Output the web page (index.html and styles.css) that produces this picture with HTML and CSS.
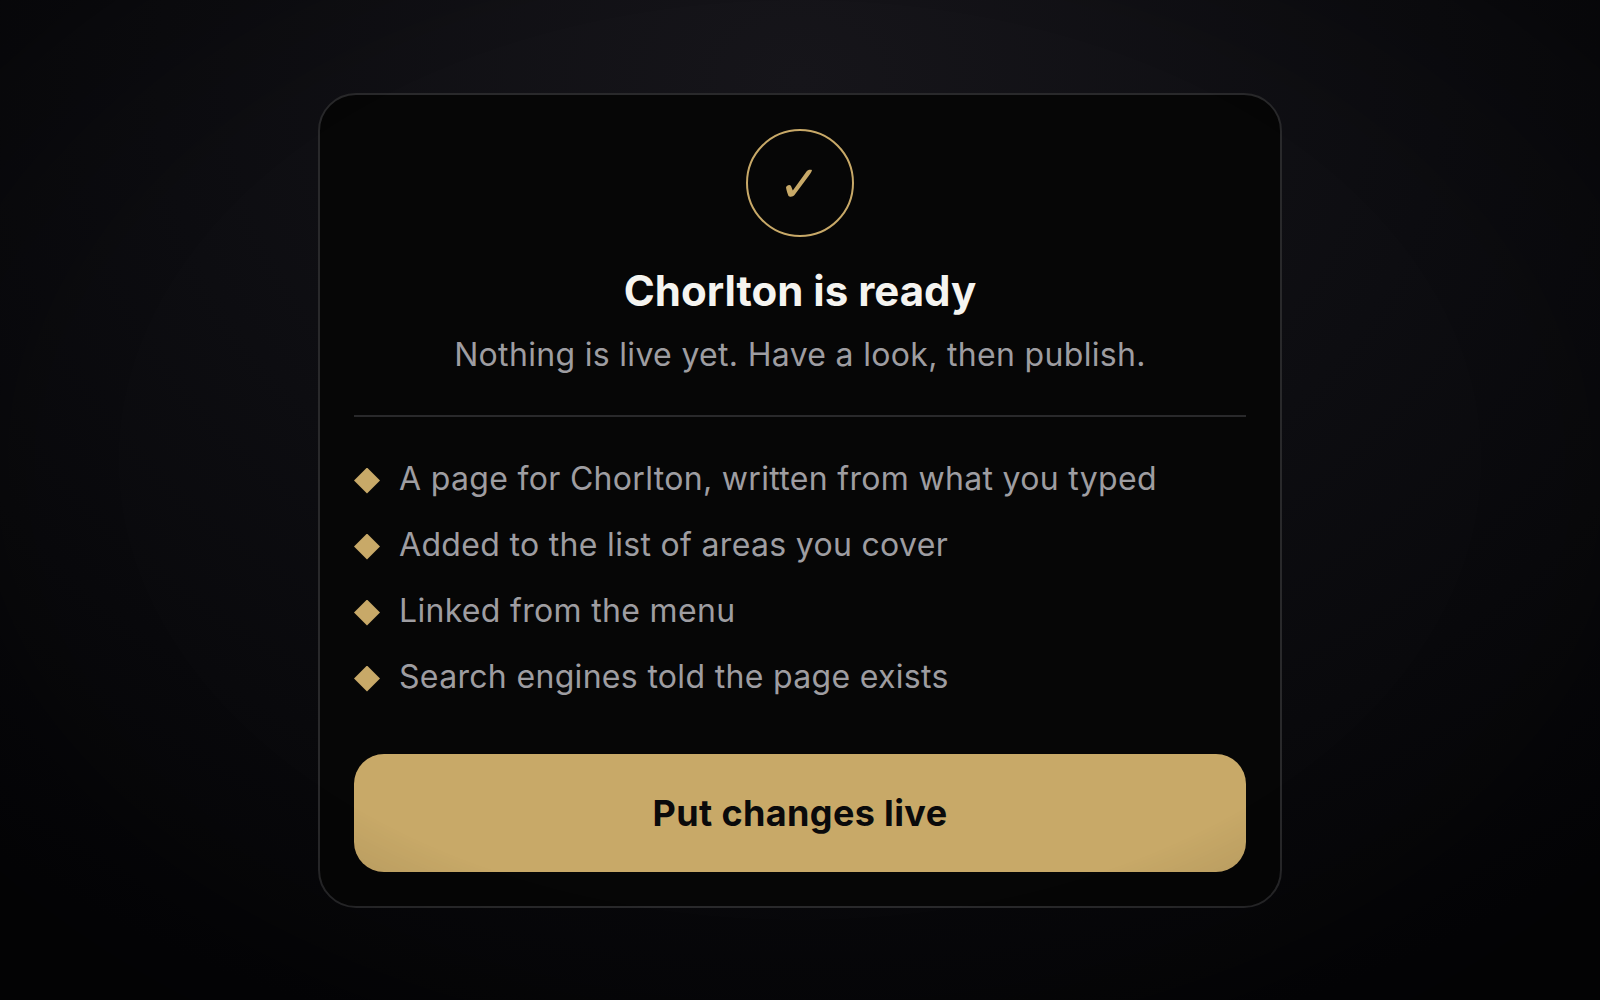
FILE: index.html
```html
<!DOCTYPE html>
<html lang="en">
<head>
<meta charset="utf-8">
<meta name="viewport" content="width=device-width, initial-scale=1">
<title>Chorlton is ready</title>
<link rel="stylesheet" href="styles.css">
</head>
<body>
<main class="card">
  <header class="intro">
    <div class="badge">
      <svg class="tick" viewBox="0 0 28 28" aria-hidden="true"><path d="M1 18.500C1.500 16 5 15 6 17L7.800 21.500L21.500 2.500C22.500 1 24.500 .5 27 1C26.500 3 25.500 4.500 24 6.500L9.500 26C8 28.200 4.500 28 3.500 27C2.500 24.500 1.500 21.500 1 18.500Z"/></svg>
    </div>
    <h1 class="title">Chorlton is ready</h1>
    <p class="subtitle">Nothing is live yet. Have a look, then publish.</p>
  </header>
  <ul class="changes">
    <li class="change">A page for Chorlton, written from what you typed</li>
    <li class="change">Added to the list of areas you cover</li>
    <li class="change">Linked from the menu</li>
    <li class="change">Search engines told the page exists</li>
  </ul>
  <button class="publish" type="button">Put changes live</button>
</main>
</body>
</html>
```
FILE: styles.css
```css
* { box-sizing: border-box; }

body {
  margin: 0;
  min-height: 100vh;
  display: flex;
  align-items: center;
  justify-content: center;
  background: radial-gradient(ellipse 80% 100% at 50% 8%, #16151a, #0d0d11 50%, #050507);
  color: #9e9da1;
  font-family: Inter, sans-serif;
}

/* Vignette over the whole scene */
body::after {
  content: "";
  position: fixed;
  inset: 0;
  background: radial-gradient(ellipse at 50% 46%, transparent 60%, rgba(0, 0, 0, .4));
  pointer-events: none;
}

.card {
  width: 964px;
  max-width: 100%;
  padding: 34px;
  border: 2px solid #29292b;
  border-radius: 38px;
  background: #060606;
}

.intro {
  display: flex;
  flex-direction: column;
  align-items: center;
  padding-bottom: 36px;
  border-bottom: 2px solid #29292b;
  text-align: center;
}

.badge {
  display: grid;
  place-items: center;
  width: 108px;
  height: 108px;
  padding-right: 2px;
  border: 2px solid #c8a968;
  border-radius: 50%;
}

.tick {
  width: 28px;
  height: 28px;
  fill: #c8a968;
}

.title {
  margin: 28px 0 0;
  color: #f5f4f0;
  font-size: 42px;
  font-weight: 700;
  line-height: 52px;
}

.subtitle {
  margin: 14px 0 0;
  font-size: 32px;
  letter-spacing: .01em;
  line-height: 48px;
}

.changes {
  display: grid;
  gap: 18px;
  margin: 38px 0 53px;
  padding: 0;
  list-style: none;
}

.change {
  display: flex;
  align-items: center;
  gap: 19px;
  font-size: 32px;
  letter-spacing: .01em;
  line-height: 48px;
}

.change::before {
  content: "";
  width: 26px;
  height: 26px;
  margin-top: 4px;
  background: #c8a968;
  clip-path: polygon(50% 0, 100% 50%, 50% 100%, 0 50%);
}

.publish {
  display: block;
  width: 100%;
  padding: 34px;
  border: 0;
  border-radius: 30px;
  background: #c8a968;
  color: #0a0a0b;
  font: 700 36px/50px Inter, sans-serif;
  letter-spacing: .01em;
}
```
